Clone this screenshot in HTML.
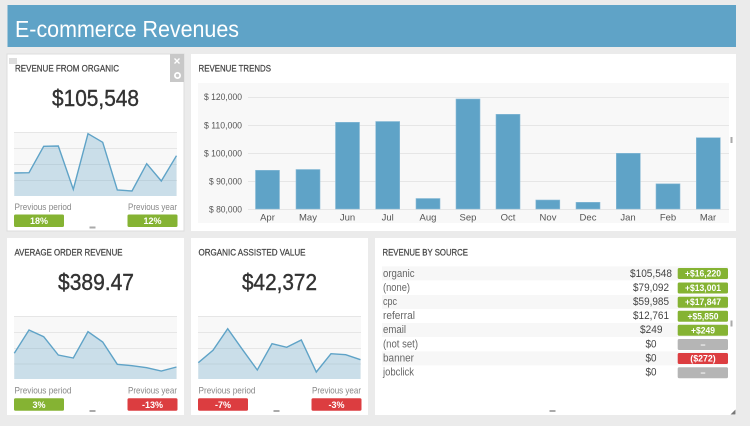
<!DOCTYPE html>
<html lang="en"><head><meta charset="utf-8"><title>E-commerce Revenues</title>
<style>
html,body{margin:0;padding:0;background:#ebebeb;overflow:hidden}
svg{display:block}
text{font-family:"Liberation Sans",sans-serif}
.h{font-size:9.500px;fill:#444;stroke:#444;stroke-width:.25}
.big{font-size:23px;fill:#333;stroke:#333;stroke-width:.4}
.pl{font-size:9.500px;fill:#888}
.bt{font-size:9px;fill:#fff;font-weight:700;text-anchor:middle}
.ax{font-size:9.500px;fill:#555}
.r{text-anchor:end}
.m{text-anchor:middle}
.t{font-size:11px;fill:#666}
.v{font-size:11px;fill:#444}
.b{fill:#5fa3c7;stroke:#8dbdd8;stroke-width:.6}
.g{stroke:#e6e6e6;stroke-width:1}
.a{fill:#5fa3c7;fill-opacity:.3;stroke:none}
.l{fill:none;stroke:#5fa3c7;stroke-width:1.400}
.gr{fill:#85b333}.re{fill:#dc3d40}.gy{fill:#b5b5b5}
.hd{fill:#aaa}
</style></head><body>
<svg width="750" height="426" viewBox="0 0 750 426" xmlns="http://www.w3.org/2000/svg">
<rect width="750" height="426" fill="#ebebeb"/>
<rect x="7.500" y="5" width="728.500" height="42" fill="#5fa3c7"/>
<text x="15" y="37" font-size="23" fill="#fff" textLength="224" lengthAdjust="spacingAndGlyphs">E-commerce Revenues</text>

<!-- Cards -->
<rect x="7" y="54" width="177" height="177" fill="#fff" stroke="#dcdcdc" stroke-width="1"/>
<rect x="191" y="54" width="545" height="177" fill="#fff"/>
<rect x="7" y="238" width="177" height="177" fill="#fff"/>
<rect x="191" y="238" width="177" height="177" fill="#fff"/>
<rect x="375" y="238" width="361" height="177" fill="#fff"/>

<!-- Card 1 -->
<rect x="170" y="54" width="14" height="28" fill="#c8c8c8"/>
<path d="M174.500 58.500l5 5m0-5l-5 5" stroke="#fff" stroke-width="1.400" fill="none"/>
<circle cx="177.500" cy="75.500" r="2.600" fill="none" stroke="#fff" stroke-width="1.800"/>
<rect x="9" y="58" width="8" height="6" fill="#dedede"/>
<text class="h" x="15" y="71.500" textLength="104" lengthAdjust="spacingAndGlyphs">REVENUE FROM ORGANIC</text>
<text class="big" x="52" y="106" textLength="87" lengthAdjust="spacingAndGlyphs">$105,548</text>
<rect x="14" y="132" width="163" height="64" fill="#f8f8f8"/>
<path class="g" d="M14 132.500H177M14 148.500H177M14 164.500H177M14 180.500H177"/>
<path class="a" d="M14.300 173L29 172.700L43.700 146.300L58.300 146L73.300 189.300L88 133.700L102.700 142.300L117.300 190L132 191L146.700 163.700L161.300 181L176.500 155.700V196H14.300Z"/>
<path class="l" d="M14.300 173L29 172.700L43.700 146.300L58.300 146L73.300 189.300L88 133.700L102.700 142.300L117.300 190L132 191L146.700 163.700L161.300 181L176.500 155.700"/>
<text class="pl" x="14.500" y="210" textLength="57" lengthAdjust="spacingAndGlyphs">Previous period</text>
<text class="pl" x="128" y="210" textLength="49" lengthAdjust="spacingAndGlyphs">Previous year</text>
<rect class="gr" x="14" y="214.500" width="50" height="12.500" rx="1.500"/>
<rect class="gr" x="127.500" y="214.500" width="50" height="12.500" rx="1.500"/>
<text class="bt" x="39" y="224">18%</text>
<text class="bt" x="152.500" y="224">12%</text>
<rect class="hd" x="89.500" y="226.500" width="6" height="2"/>

<!-- Revenue Trends -->
<text class="h" x="198.500" y="71.500" textLength="72.500" lengthAdjust="spacingAndGlyphs">REVENUE TRENDS</text>
<rect x="198" y="83" width="531" height="140" fill="#f8f8f8"/>
<path class="g" d="M248 97.500H729M248 125.500H729M248 153.500H729M248 181.500H729M248 209.500H729"/>
<text class="ax r" x="242" y="100" textLength="38" lengthAdjust="spacingAndGlyphs">$ 120,000</text>
<text class="ax r" x="242" y="128.500" textLength="38" lengthAdjust="spacingAndGlyphs">$ 110,000</text>
<text class="ax r" x="242" y="156.500" textLength="38" lengthAdjust="spacingAndGlyphs">$ 100,000</text>
<text class="ax r" x="242" y="184.500" textLength="33" lengthAdjust="spacingAndGlyphs">$ 90,000</text>
<text class="ax r" x="242" y="212.500" textLength="33" lengthAdjust="spacingAndGlyphs">$ 80,000</text>
<rect class="b" x="255.500" y="170.300" width="24" height="38.700"/>
<rect class="b" x="296" y="169.500" width="24" height="39.500"/>
<rect class="b" x="335.500" y="122.300" width="24" height="86.700"/>
<rect class="b" x="375.700" y="121.500" width="24" height="87.500"/>
<rect class="b" x="416" y="198.500" width="24" height="10.500"/>
<rect class="b" x="456" y="99" width="24" height="110"/>
<rect class="b" x="496" y="114.300" width="24" height="94.700"/>
<rect class="b" x="535.800" y="200" width="24" height="9"/>
<rect class="b" x="576" y="202.300" width="24" height="6.700"/>
<rect class="b" x="616.300" y="153.300" width="24" height="55.700"/>
<rect class="b" x="656" y="183.800" width="24" height="25.200"/>
<rect class="b" x="696.300" y="137.700" width="24" height="71.300"/>
<text class="ax m" x="267.500" y="220.500">Apr</text>
<text class="ax m" x="308" y="220.500">May</text>
<text class="ax m" x="347.500" y="220.500">Jun</text>
<text class="ax m" x="387.700" y="220.500">Jul</text>
<text class="ax m" x="428" y="220.500">Aug</text>
<text class="ax m" x="468" y="220.500">Sep</text>
<text class="ax m" x="508" y="220.500">Oct</text>
<text class="ax m" x="548" y="220.500">Nov</text>
<text class="ax m" x="588" y="220.500">Dec</text>
<text class="ax m" x="628" y="220.500">Jan</text>
<text class="ax m" x="668" y="220.500">Feb</text>
<text class="ax m" x="708" y="220.500">Mar</text>
<rect class="hd" x="730.500" y="137" width="2" height="6"/>

<!-- Average Order Revenue -->
<text class="h" x="14.500" y="255.500" textLength="108" lengthAdjust="spacingAndGlyphs">AVERAGE ORDER REVENUE</text>
<text class="big" x="58" y="290" textLength="76" lengthAdjust="spacingAndGlyphs">$389.47</text>
<rect x="14" y="316" width="163" height="63" fill="#f8f8f8"/>
<path class="g" d="M14 316.500H177M14 332.500H177M14 348.500H177M14 364H177"/>
<path class="a" d="M14.300 353.300L29 330L43.700 336.700L58.300 355L73.300 358L88 331.700L102.700 342L117.300 364.300L132 365.700L146.700 367.700L161.300 371L176.500 367V379H14.300Z"/>
<path class="l" d="M14.300 353.300L29 330L43.700 336.700L58.300 355L73.300 358L88 331.700L102.700 342L117.300 364.300L132 365.700L146.700 367.700L161.300 371L176.500 367"/>
<text class="pl" x="14.500" y="393.500" textLength="57" lengthAdjust="spacingAndGlyphs">Previous period</text>
<text class="pl" x="128" y="393.500" textLength="49" lengthAdjust="spacingAndGlyphs">Previous year</text>
<rect class="gr" x="14" y="398.300" width="50" height="12.500" rx="1.500"/>
<rect class="re" x="127.500" y="398.300" width="50" height="12.500" rx="1.500"/>
<text class="bt" x="39" y="408">3%</text>
<text class="bt" x="152.500" y="408">-13%</text>
<rect class="hd" x="89.500" y="410" width="6" height="2"/>

<!-- Organic Assisted Value -->
<text class="h" x="198.500" y="255.500" textLength="107" lengthAdjust="spacingAndGlyphs">ORGANIC ASSISTED VALUE</text>
<text class="big" x="242" y="290" textLength="75" lengthAdjust="spacingAndGlyphs">$42,372</text>
<rect x="198" y="316" width="163" height="63" fill="#f8f8f8"/>
<path class="g" d="M198 316.500H361M198 332.500H361M198 348.500H361M198 364H361"/>
<path class="a" d="M198.300 362.700L213 350.300L227.700 328.700L242.300 349.300L257.300 370L272 343.700L286.700 347.300L301.300 340L316.300 372L331 353.700L345.700 354.700L360.500 359.700V379H198.300Z"/>
<path class="l" d="M198.300 362.700L213 350.300L227.700 328.700L242.300 349.300L257.300 370L272 343.700L286.700 347.300L301.300 340L316.300 372L331 353.700L345.700 354.700L360.500 359.700"/>
<text class="pl" x="198.500" y="393.500" textLength="57" lengthAdjust="spacingAndGlyphs">Previous period</text>
<text class="pl" x="312" y="393.500" textLength="49" lengthAdjust="spacingAndGlyphs">Previous year</text>
<rect class="re" x="198" y="398.300" width="50" height="12.500" rx="1.500"/>
<rect class="re" x="311.500" y="398.300" width="50" height="12.500" rx="1.500"/>
<text class="bt" x="223" y="408">-7%</text>
<text class="bt" x="336.500" y="408">-3%</text>
<rect class="hd" x="273.500" y="410" width="6" height="2"/>

<!-- Revenue By Source -->
<text class="h" x="382.500" y="255.500" textLength="85.500" lengthAdjust="spacingAndGlyphs">REVENUE BY SOURCE</text>
<rect x="382" y="266.300" width="346" height="14" fill="#f7f7f7"/>
<rect x="382" y="295" width="346" height="14" fill="#f7f7f7"/>
<rect x="382" y="323" width="346" height="14" fill="#f7f7f7"/>
<rect x="382" y="351.300" width="346" height="14" fill="#f7f7f7"/>
<text class="t" x="383" y="277" textLength="31.500" lengthAdjust="spacingAndGlyphs">organic</text>
<text class="t" x="383" y="291" textLength="27" lengthAdjust="spacingAndGlyphs">(none)</text>
<text class="t" x="383" y="305" textLength="14" lengthAdjust="spacingAndGlyphs">cpc</text>
<text class="t" x="383" y="319" textLength="32" lengthAdjust="spacingAndGlyphs">referral</text>
<text class="t" x="383" y="333" textLength="23" lengthAdjust="spacingAndGlyphs">email</text>
<text class="t" x="383" y="347.500" textLength="35" lengthAdjust="spacingAndGlyphs">(not set)</text>
<text class="t" x="383" y="361.500" textLength="31" lengthAdjust="spacingAndGlyphs">banner</text>
<text class="t" x="383" y="375.500" textLength="31" lengthAdjust="spacingAndGlyphs">jobclick</text>
<text class="v" x="630" y="277" textLength="42" lengthAdjust="spacingAndGlyphs">$105,548</text>
<text class="v" x="633" y="291" textLength="36" lengthAdjust="spacingAndGlyphs">$79,092</text>
<text class="v" x="633" y="305" textLength="36" lengthAdjust="spacingAndGlyphs">$59,985</text>
<text class="v" x="633" y="319" textLength="36" lengthAdjust="spacingAndGlyphs">$12,761</text>
<text class="v" x="640" y="333" textLength="22.500" lengthAdjust="spacingAndGlyphs">$249</text>
<text class="v" x="645.500" y="347.500" textLength="11" lengthAdjust="spacingAndGlyphs">$0</text>
<text class="v" x="645.500" y="361.500" textLength="11" lengthAdjust="spacingAndGlyphs">$0</text>
<text class="v" x="645.500" y="375.500" textLength="11" lengthAdjust="spacingAndGlyphs">$0</text>
<rect class="gr" x="677.700" y="268" width="50.300" height="11" rx="1.500"/>
<rect class="gr" x="677.700" y="282.500" width="50.300" height="11" rx="1.500"/>
<rect class="gr" x="677.700" y="296.700" width="50.300" height="11" rx="1.500"/>
<rect class="gr" x="677.700" y="310.800" width="50.300" height="11" rx="1.500"/>
<rect class="gr" x="677.700" y="324.800" width="50.300" height="11" rx="1.500"/>
<rect class="gy" x="677.700" y="339" width="50.300" height="11" rx="1.500"/>
<rect class="re" x="677.700" y="353" width="50.300" height="11" rx="1.500"/>
<rect class="gy" x="677.700" y="367.200" width="50.300" height="11" rx="1.500"/>
<text class="bt" x="703" y="276.700" textLength="36" lengthAdjust="spacingAndGlyphs">+$16,220</text>
<text class="bt" x="703" y="291" textLength="36" lengthAdjust="spacingAndGlyphs">+$13,001</text>
<text class="bt" x="703" y="305.200" textLength="36" lengthAdjust="spacingAndGlyphs">+$17,847</text>
<text class="bt" x="703" y="319.300" textLength="31" lengthAdjust="spacingAndGlyphs">+$5,850</text>
<text class="bt" x="703" y="333.300" textLength="24" lengthAdjust="spacingAndGlyphs">+$249</text>
<text class="bt" x="703" y="347.500">–</text>
<text class="bt" x="703" y="361.500" textLength="25.500" lengthAdjust="spacingAndGlyphs">($272)</text>
<text class="bt" x="703" y="375.700">–</text>
<rect class="hd" x="549.500" y="410" width="6" height="2"/>
<rect class="hd" x="730.500" y="320.500" width="2" height="6"/>
<path d="M735.500 409.500V414.500H730.500Z" fill="#777"/>
</svg>
</body></html>
